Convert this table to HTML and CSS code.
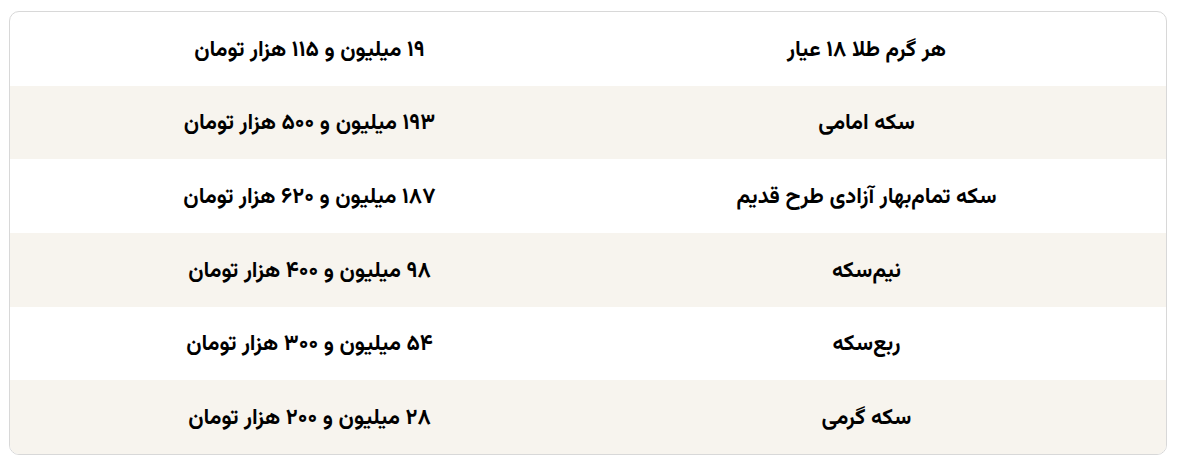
FILE: index.html
```html
<!DOCTYPE html>
<html lang="fa" dir="rtl">
<head>
<meta charset="utf-8">
<title>قیمت طلا و سکه</title>
<link rel="stylesheet" href="styles.css">
</head>
<body>
<div class="price-table">
  <div class="row">
    <div class="cell">هر گرم طلا ۱۸ عیار</div>
    <div class="cell">۱۹ میلیون و ۱۱۵ هزار تومان</div>
  </div>
  <div class="row alt">
    <div class="cell">سکه امامی</div>
    <div class="cell">۱۹۳ میلیون و ۵۰۰ هزار تومان</div>
  </div>
  <div class="row">
    <div class="cell">سکه تمام‌بهار آزادی طرح قدیم</div>
    <div class="cell">۱۸۷ میلیون و ۶۲۰ هزار تومان</div>
  </div>
  <div class="row alt">
    <div class="cell">نیم‌سکه</div>
    <div class="cell">۹۸ میلیون و ۴۰۰ هزار تومان</div>
  </div>
  <div class="row">
    <div class="cell">ربع‌سکه</div>
    <div class="cell">۵۴ میلیون و ۳۰۰ هزار تومان</div>
  </div>
  <div class="row alt">
    <div class="cell">سکه گرمی</div>
    <div class="cell">۲۸ میلیون و ۲۰۰ هزار تومان</div>
  </div>
</div>
</body>
</html>
```
FILE: styles.css
```css
html, body {
  margin: 0;
  padding: 0;
  background: #ffffff;
}
body {
  padding: 11px 10px 0 9px;
  font-family: "Vazirmatn", "Vazir", "Noto Sans Arabic", "DejaVu Sans", sans-serif;
  color: #000000;
}
.price-table {
  border: 1px solid #d8d8d8;
  border-radius: 10px;
  overflow: hidden;
  background: #ffffff;
}
.row {
  display: grid;
  grid-template-columns: 1fr 1fr;
  height: 73.67px;
  padding: 0 21px;
  align-items: center;
}
.row.alt {
  background: #f7f4ee;
}
.cell {
  text-align: center;
  font-size: 22px;
  font-weight: 700;
  line-height: 1;
  padding-top: 4px;
}
```
